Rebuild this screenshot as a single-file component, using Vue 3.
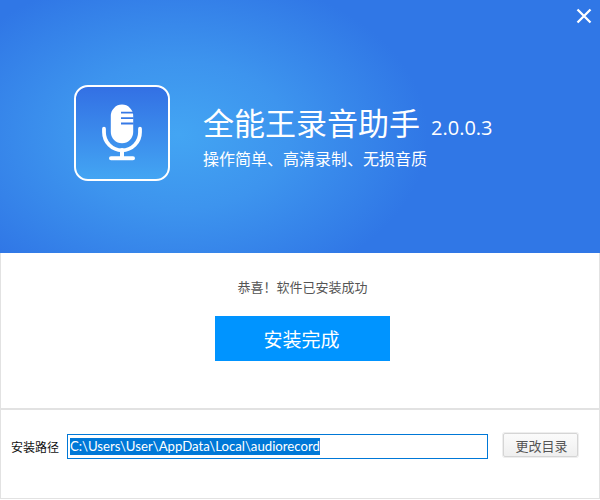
<script setup>
const path = 'C:\\Users\\User\\AppData\\Local\\audiorecord'
</script>

<template>
  <div class="win">
    <header class="hero">
      <button class="close" aria-label="关闭">
        <svg width="16" height="16" viewBox="0 0 16 16"><path d="M1.500 1.500L14.500 14.500M14.500 1.500L1.500 14.500" stroke="#fff" stroke-width="2.300" fill="none"/></svg>
      </button>
      <div class="logo">
        <svg width="44" height="62" viewBox="0 0 44 62">
          <path fill="#fff" d="M10.800 13.800a11.200 11.200 0 0 1 22.400 0v16.300a11.200 11.200 0 0 1-22.400 0z"/>
          <path stroke="#3679e6" stroke-width="1.800" d="M21 10.700h12.500M21 16.200h12.500M21 21.500h12.500"/>
          <path d="M4 26.700v3.600a18 18 0 0 0 36 0v-3.600" fill="none" stroke="#fff" stroke-width="3.800" stroke-linecap="round"/>
          <path d="M22 48v8M11 56.300h22" fill="none" stroke="#fff" stroke-width="4" stroke-linecap="round"/>
        </svg>
      </div>
      <div class="titles">
        <h1 class="title"><span>全能王录音助手</span><small>2.0.0.3</small></h1>
        <p class="slogan">操作简单、高清录制、无损音质</p>
      </div>
    </header>
    <main class="body">
      <p class="msg">恭喜！软件已安装成功</p>
      <button class="done">安装完成</button>
    </main>
    <footer class="foot">
      <label class="lab">安装路径</label>
      <div class="input"><span class="sel">{{ path }}</span></div>
      <button class="change">更改目录</button>
    </footer>
  </div>
</template>

<style>
html, body { margin: 0; background: #fff; }
</style>

<style scoped>
.win {
  width: 600px; height: 500px; box-sizing: border-box; overflow: hidden;
  display: flex; flex-direction: column; background: #fff;
  font-family: "Noto Sans CJK SC", "Liberation Sans", sans-serif;
}
.hero {
  position: relative; height: 253px; flex: none; display: flex; align-items: flex-start;
  background: radial-gradient(ellipse 250px 165px at 178px 135px, #43a5f3 0%, #3d94ee 45%, #3077e6 100%) #3077e6;
}
.close { position: absolute; top: 8px; right: 8px; width: 16px; height: 16px; padding: 0; border: 0; background: none; }
.close svg { display: block; }
.logo {
  width: 92px; height: 92px; margin: 85px 0 0 74px; flex: none;
  border: 2px solid #fff; border-radius: 14px; display: flex; align-items: center; justify-content: center;
  background: linear-gradient(180deg, #3370e4, #43a5f3);
}
.titles { margin: 100px 0 0 33px; color: #fff; }
.title { margin: 0; display: flex; align-items: baseline; font-weight: 400; font-size: 31px; line-height: 44px; }
.title small { font-family: "Open Sans", sans-serif; font-size: 20px; margin-left: 11px; }
.slogan { margin: -4px 0 0; font-size: 16px; line-height: 24px; }
.body {
  flex: none; height: 157px; box-sizing: border-box; display: flex; flex-direction: column; align-items: center;
  border: 1px solid #e2e2e2; border-width: 0 1px 2px; padding-left: 5px;
}
.msg { margin: 24px 0 0; font-size: 13px; line-height: 20px; color: #555; }
.done {
  margin-top: 19px; width: 175px; height: 45px; border: 0; padding: 0 2px 0 0; background: #0094ff;
  color: #fff; font: 400 19px "Noto Sans CJK SC", sans-serif;
}
.foot {
  flex: none; height: 89px; box-sizing: border-box; display: flex; align-items: flex-start;
  border: 1px solid #e2e2e2; border-width: 0 1px 1px;
}
.lab { margin: 28px 0 0 10px; font-size: 12px; line-height: 18px; color: #111; }
.input {
  margin: 24px 0 0 8px; width: 421px; height: 25px; box-sizing: border-box; flex: none; border: 1px solid #0078d7;
  padding: 2px; font: 13.2px/17px Lato, sans-serif; display: flex; align-items: center;
}
.sel { background: #0078d7; color: #fff; }
.change {
  margin: 23px 0 0 15px; width: 75px; height: 24px; padding: 0 0 0 2px; box-sizing: border-box; flex: none;
  border: 1px solid #d5d5d5; border-radius: 2px; background: linear-gradient(#fbfbfb, #efefef);
  color: #555; font: 13px "Noto Sans CJK SC", sans-serif; box-shadow: 0 0 0 1px #eee;
}
</style>
